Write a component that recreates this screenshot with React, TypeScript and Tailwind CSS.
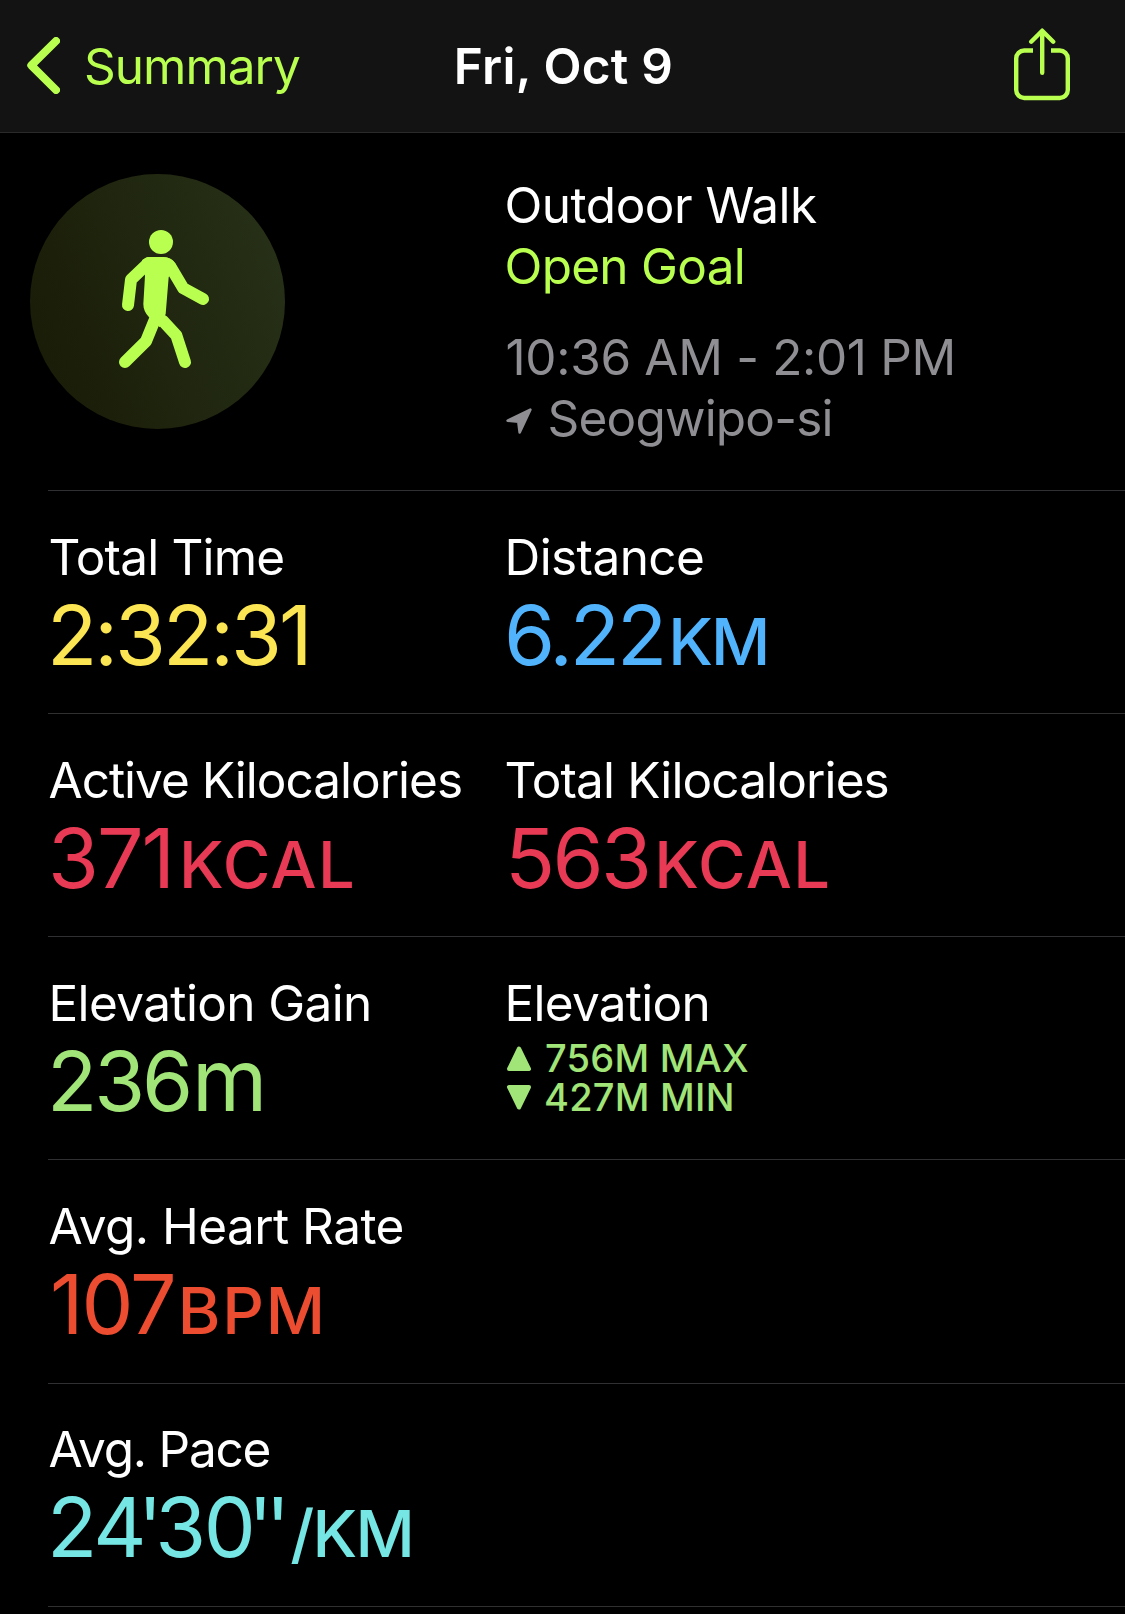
import type { ReactNode } from 'react';

interface MetricProps {
  label: string;
  labelClass: string;
  children: ReactNode;
}

export default function App() {
  return (
    <div className="h-[1614px] w-[1125px] overflow-hidden bg-black font-['Inter',sans-serif] text-[49.5px] text-white">
      <Header />
      <main>
        <WorkoutInfo />
        <MetricRow>
          <Metric label="Total Time" labelClass="tracking-[-0.83px]">
            <p className="-ml-px text-[#fbe552]">
              <span className="tracking-[-3.01px]">2:32:31</span>
            </p>
          </Metric>
          <Metric label="Distance" labelClass="tracking-[-0.58px]">
            <p className="text-[#51b3fb]">
              <span className="tracking-[-3.15px]">6.22</span>
              <Unit className="ml-[4px] tracking-[-2px]">KM</Unit>
            </p>
          </Metric>
        </MetricRow>
        <MetricRow>
          <Metric label="Active Kilocalories" labelClass="tracking-[-1px]">
            <p className="text-[#e83a54]">
              <span className="tracking-[-2.07px]">371</span>
              <Unit className="ml-[6px] tracking-[1.4px]">KCAL</Unit>
            </p>
          </Metric>
          <Metric label="Total Kilocalories" labelClass="tracking-[-0.88px]">
            <p className="ml-px text-[#e83a54]">
              <span className="tracking-[-2.66px]">563</span>
              <Unit className="ml-[5px] tracking-[1.4px]">KCAL</Unit>
            </p>
          </Metric>
        </MetricRow>
        <MetricRow>
          <Metric label="Elevation Gain" labelClass="tracking-[-0.63px]">
            <p className="-ml-px text-[#a1e477]">
              <span className="tracking-[-3.14px]">236</span>
              <span className="ml-[2px] text-[86px] leading-[0]">m</span>
            </p>
          </Metric>
          <Metric label="Elevation" labelClass="tracking-[-0.73px]">
            <div className="-mt-[2px] text-[38px] leading-[39px] font-medium text-[#a1e477]">
              <p className="flex">
                <Triangle className="mt-[7px]" />
                <span className="ml-[14px] tracking-[0.25px]">756M MAX</span>
              </p>
              <p className="flex">
                <Triangle className="mt-[7px] rotate-180" />
                <span className="ml-[13px] tracking-[0.25px]">427M MIN</span>
              </p>
            </div>
          </Metric>
        </MetricRow>
        <MetricRow className="h-[224px] pt-[36px]">
          <Metric label="Avg. Heart Rate" labelClass="tracking-[-0.55px]">
            <p className="ml-[2px] text-[#ec4c2f]">
              <span className="tracking-[-2px]">107</span>
              <Unit className="ml-[3px] tracking-[1.8px]">BPM</Unit>
            </p>
          </Metric>
        </MetricRow>
        <MetricRow className="h-[223px] pt-[35px]">
          <Metric label="Avg. Pace" labelClass="tracking-[-1.23px]">
            <p className="-ml-px text-[#75e6e3]">
              <span className="tracking-[-4px]">2</span>
              <span className="tracking-[-9px]">4</span>
              <span className="tracking-[-7px]">'</span>
              <span className="tracking-[-2.5px]">3</span>
              <span className="tracking-[-8px]">0</span>
              <span className="tracking-[-7px]">''</span>
              <Unit className="ml-[7px] tracking-[-1.8px]">/KM</Unit>
            </p>
          </Metric>
        </MetricRow>
      </main>
    </div>
  );
}

function Header() {
  return (
    <header className="grid h-[133px] grid-cols-[1fr_auto_1fr] items-center border-b border-[#2a2a2b] bg-[#131313] leading-[60px]">
      <button className="flex items-center pl-[27px] text-[#b9ff4f]">
        <svg className="-mt-px h-[57px] w-[33px]" viewBox="0 0 33 57" fill="none" stroke="currentColor" strokeWidth="8" strokeLinecap="round" strokeLinejoin="round">
          <path d="M29 4L4.300 28.300L29 53" />
        </svg>
        <span className="ml-[24px] tracking-[-1px]">Summary</span>
      </button>
      <h1 className="ml-[2px] font-semibold tracking-[0.25px]">Fri, Oct 9</h1>
      <button className="mr-[55px] justify-self-end text-[#b9ff4f]">
        <svg className="-mt-[3px] h-[73px] w-[56px]" viewBox="0 0 56 73" fill="none" stroke="currentColor" strokeWidth="4.400" strokeLinejoin="round">
          <path d="M19 22.500H10.200a8 8 0 0 0-8 8V62a8 8 0 0 0 8 8H45.800a8 8 0 0 0 8-8V30.500a8 8 0 0 0-8-8H37" />
          <path strokeLinecap="round" d="M28.200 3V44.700M17.200 13.700L28.200 2.700L39.200 13.700" />
        </svg>
      </button>
    </header>
  );
}

function WorkoutInfo() {
  return (
    <section>
      <div className="flex h-[357px] pl-[30px] pt-[41px]">
        <div className="h-[255px] w-[255px] rounded-full bg-linear-[70deg] from-[#181a05] to-[#283219]">
          <WalkIcon />
        </div>
        <div className="mt-px ml-[219.5px] leading-[61px]">
          <p className="tracking-[-0.5px]">Outdoor Walk</p>
          <p className="tracking-[-0.72px] text-[#b9ff4f]">Open Goal</p>
          <p className="mt-[30px] ml-px tracking-[-0.33px] text-[#8e8e93]">10:36 AM - 2:01 PM</p>
          <p className="ml-px flex items-center text-[#8e8e93]">
            <svg className="mt-[4px] h-[26px] w-[26px]" viewBox="0 0 78 78" fill="currentColor" stroke="currentColor" strokeWidth="8" strokeLinejoin="round">
              <path d="M73 5L5 38L37 41L41 73Z" />
            </svg>
            <span className="ml-[16px] tracking-[-0.8px]">Seogwipo-si</span>
          </p>
        </div>
      </div>
      <div className="ml-12 h-px bg-[#303032]" />
    </section>
  );
}

function MetricRow({ className = 'h-[223px] pt-[36px]', children }: { className?: string; children: ReactNode }) {
  return (
    <section className={`ml-12 grid grid-cols-[456px_1fr] border-b border-[#303032] ${className}`}>
      {children}
    </section>
  );
}

function Metric({ label, labelClass, children }: MetricProps) {
  return (
    <div className="whitespace-nowrap">
      <h2 className={`ml-[0.5px] leading-[60px] ${labelClass}`}>{label}</h2>
      <div className="mt-[8px] flex h-[80px] items-start text-[82.5px] leading-[80px]">{children}</div>
    </div>
  );
}

function Unit({ className, children }: { className: string; children: ReactNode }) {
  return <span className={`text-[65px] leading-none font-medium ${className}`}>{children}</span>;
}

function Triangle({ className }: { className: string }) {
  return (
    <svg className={`ml-[3px] h-[25px] w-[24px] ${className}`} viewBox="0 0 24 25" fill="currentColor" stroke="currentColor" strokeWidth="4" strokeLinejoin="round">
      <path d="M12 2.500L22 23H2Z" />
    </svg>
  );
}

function WalkIcon() {
  return (
    <svg className="h-full w-full text-[#b9ff4f]" viewBox="30 42 765 765" fill="none" stroke="currentColor" strokeWidth="36" strokeLinecap="round" strokeLinejoin="round">
      <circle cx="423" cy="246" r="36" fill="currentColor" stroke="none" />
      <path d="M384 291H428C448 291 460 300 468 313L446 352L437 462L419 502L386 470C376 460 370 448 370 432L375 347L366 300Z" fill="currentColor" stroke="none" />
      <path d="M385 309L333 359L324 435" />
      <path d="M428 309C440 309 447 314 453 323L490 385L549 417" />
      <path d="M404 480L378 544L315 606" />
      <path d="M428 482L469 526L495 606" />
    </svg>
  );
}
